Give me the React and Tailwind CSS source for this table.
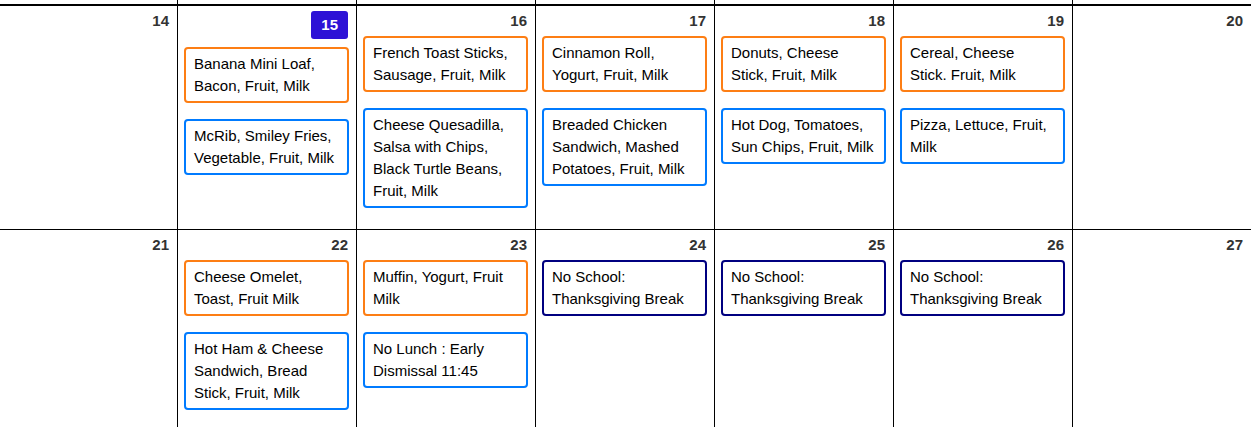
import React from 'react'

// Lunch menu calendar — two weeks of November, breakfast (orange) + lunch (blue).
const weeks = [
  [
    { day: 14, items: [] },
    {
      day: 15,
      today: true,
      items: [
        { kind: 'breakfast', text: 'Banana Mini Loaf, Bacon, Fruit, Milk' },
        { kind: 'lunch', text: 'McRib, Smiley Fries, Vegetable, Fruit, Milk' },
      ],
    },
    {
      day: 16,
      items: [
        { kind: 'breakfast', text: 'French Toast Sticks, Sausage, Fruit, Milk' },
        { kind: 'lunch', text: 'Cheese Quesadilla, Salsa with Chips, Black Turtle Beans, Fruit, Milk' },
      ],
    },
    {
      day: 17,
      items: [
        { kind: 'breakfast', text: 'Cinnamon Roll, Yogurt, Fruit, Milk' },
        { kind: 'lunch', text: 'Breaded Chicken Sandwich, Mashed Potatoes, Fruit, Milk' },
      ],
    },
    {
      day: 18,
      items: [
        { kind: 'breakfast', text: 'Donuts, Cheese Stick, Fruit, Milk' },
        { kind: 'lunch', text: 'Hot Dog, Tomatoes, Sun Chips, Fruit, Milk' },
      ],
    },
    {
      day: 19,
      items: [
        { kind: 'breakfast', text: 'Cereal, Cheese Stick. Fruit, Milk' },
        { kind: 'lunch', text: 'Pizza, Lettuce, Fruit, Milk' },
      ],
    },
    { day: 20, items: [] },
  ],
  [
    { day: 21, items: [] },
    {
      day: 22,
      items: [
        { kind: 'breakfast', text: 'Cheese Omelet, Toast, Fruit Milk' },
        { kind: 'lunch', text: 'Hot Ham & Cheese Sandwich, Bread Stick, Fruit, Milk' },
      ],
    },
    {
      day: 23,
      items: [
        { kind: 'breakfast', text: 'Muffin, Yogurt, Fruit Milk' },
        { kind: 'lunch', text: 'No Lunch : Early Dismissal 11:45' },
      ],
    },
    { day: 24, items: [{ kind: 'closed', text: 'No School: Thanksgiving Break' }] },
    { day: 25, items: [{ kind: 'closed', text: 'No School: Thanksgiving Break' }] },
    { day: 26, items: [{ kind: 'closed', text: 'No School: Thanksgiving Break' }] },
    { day: 27, items: [] },
  ],
]

const borderFor = {
  breakfast: 'border-[#fd7e14]',
  lunch: 'border-[#007bff]',
  closed: 'border-[#000080]',
}

function Event({ kind, text, first }) {
  return (
    <div
      className={
        'rounded-[4px] border-2 bg-white pl-[8px] pr-[10px] pt-[4px] pb-[4px] text-[15px] leading-[22px] text-black ' +
        borderFor[kind] +
        (first ? '' : ' mt-[16px]')
      }
    >
      {text}
    </div>
  )
}

function DayCell({ cell, col }) {
  return (
    <div
      className={
        'flex h-full flex-col pt-[4px] pl-[6px] pr-[7px] ' + (col > 0 ? 'border-l border-black' : '')
      }
    >
      {cell.today ? (
        <div className="flex h-[37px] justify-end pr-[1px]">
          <span className="mt-[1px] h-[28px] rounded-[3px] bg-[#2d12d6] px-[10px] text-[15px] font-bold leading-[28px] text-white">
            {cell.day}
          </span>
        </div>
      ) : (
        <div className="h-[26px] pr-[1px] text-right text-[15px] font-bold leading-[22px] text-[#333]">
          {cell.day}
        </div>
      )}
      {cell.items.map((it, i) => (
        <Event key={i} kind={it.kind} text={it.text} first={i === 0} />
      ))}
    </div>
  )
}

export default function App() {
  const cols = 'grid grid-cols-[177px_repeat(6,179px)]'
  return (
    <div className="h-[427px] w-[1251px] overflow-hidden bg-white font-['Liberation_Sans',Arial,sans-serif]">
      {/* tail of the previous week */}
      <div className={cols + ' h-[4px]'}>
        {Array.from({ length: 7 }).map((_, i) => (
          <div key={i} className={i > 0 ? 'border-l border-black' : ''} />
        ))}
      </div>
      <div className="border-t-2 border-black">
        <div className={cols + ' h-[224px] border-b border-black'}>
          {weeks[0].map((c, i) => (
            <DayCell key={c.day} cell={c} col={i} />
          ))}
        </div>
        <div className={cols + ' h-[220px]'}>
          {weeks[1].map((c, i) => (
            <DayCell key={c.day} cell={c} col={i} />
          ))}
        </div>
      </div>
    </div>
  )
}
